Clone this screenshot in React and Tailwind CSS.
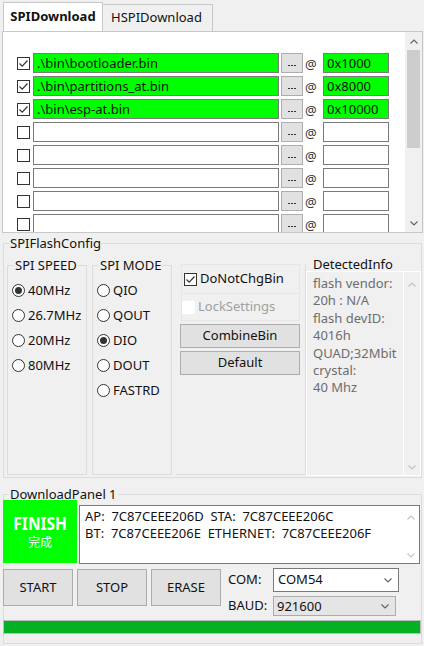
import React from "react";

const rows = [
    { on: true, file: ".\\bin\\bootloader.bin", addr: "0x1000" },
    { on: true, file: ".\\bin\\partitions_at.bin", addr: "0x8000" },
    { on: true, file: ".\\bin\\esp-at.bin", addr: "0x10000" },
    { on: false, file: "", addr: "" },
    { on: false, file: "", addr: "" },
    { on: false, file: "", addr: "" },
    { on: false, file: "", addr: "" },
    { on: false, file: "", addr: "" },
];

const speeds = [
    { label: "40MHz", on: true },
    { label: "26.7MHz", on: false },
    { label: "20MHz", on: false },
    { label: "80MHz", on: false },
];

const modes = [
    { label: "QIO", on: false },
    { label: "QOUT", on: false },
    { label: "DIO", on: true },
    { label: "DOUT", on: false },
    { label: "FASTRD", on: false },
];

const info = [
    "flash vendor:",
    "20h : N/A",
    "flash devID:",
    "4016h",
    "QUAD;32Mbit",
    "crystal:",
    "40 Mhz",
];

function Chevron({ up = false, color = "#606060", w = 8 }) {
    return (
        <svg width={w} height="5" viewBox="0 0 8 5" fill="none">
            <path
                d={up ? "M0.5 4.5L4 1L7.5 4.5" : "M0.5 0.5L4 4L7.5 0.5"}
                stroke={color}
                strokeWidth="1.1"
            />
        </svg>
    );
}

function Check({ checked, disabled = false }) {
    return (
        <div
            className={`w-[13px] h-[13px] shrink-0 border bg-white flex items-center justify-center ${
                disabled ? "border-white" : "border-[#333333]"
            }`}
        >
            {checked && (
                <svg width="11" height="11" viewBox="0 0 11 11" fill="none">
                    <path d="M1.5 5.5L4.2 8.2L9.5 2.5" stroke="#333333" strokeWidth="1.2" />
                </svg>
            )}
        </div>
    );
}

function Radio({ checked }) {
    return (
        <div className="w-[13px] h-[13px] shrink-0 rounded-full border border-[#333333] bg-white flex items-center justify-center">
            {checked && <div className="w-[7px] h-[7px] rounded-full bg-[#333333]" />}
        </div>
    );
}

function Dots() {
    return (
        <div className="flex gap-[1.5px] mt-[5px]">
            <div className="w-[1.5px] h-[1.5px] bg-[#333]" />
            <div className="w-[1.5px] h-[1.5px] bg-[#333]" />
            <div className="w-[1.5px] h-[1.5px] bg-[#333]" />
        </div>
    );
}

function FileRow({ row }) {
    const fill = row.on ? "bg-[#00ff00]" : "bg-white";
    return (
        <div className="flex items-center h-[20px] mb-[3px]">
            <Check checked={row.on} />
            <div
                className={`ml-[3px] w-[246px] h-[20px] border border-[#7a7a7a] ${fill} px-[3px] leading-[18px] whitespace-nowrap`}
            >
                {row.file}
            </div>
            <div className="ml-[2px] w-[22px] h-[20px] bg-[#e1e1e1] border border-[#adadad] flex items-center justify-center">
                <Dots />
            </div>
            <span className="w-[20px] pl-[2px] text-[#333] leading-[20px] pt-[1px]">@</span>
            <div
                className={`w-[66px] h-[20px] border border-[#7a7a7a] ${fill} px-[3px] leading-[18px]`}
            >
                {row.addr}
            </div>
        </div>
    );
}

export default function App() {
    return (
        <div className="w-[424px] h-[646px] overflow-hidden bg-[#f0f0f0] text-[13px] text-[#111] font-['Noto_Sans','Noto_Sans_CJK_SC',sans-serif]">
            {/* tabs */}
            <div className="h-[31px] flex items-end pl-[3px]">
                <div className="w-[100px] h-[29px] bg-white border border-b-0 border-[#c8c8c8] flex items-center justify-center font-bold">
                    SPIDownload
                </div>
                <div className="w-[110px] h-[27px] bg-[#f0f0f0] border border-b-0 border-l-0 border-[#c8c8c8] flex items-center pl-[8px]">
                    HSPIDownload
                </div>
            </div>

            {/* file list */}
            <div className="ml-[2px] w-[421px] h-[202px] border border-[#c8c8c8] bg-white flex overflow-hidden">
                <div className="flex-1 pt-[21px] pl-[14px]">
                    {rows.map((r, i) => (
                        <FileRow key={i} row={r} />
                    ))}
                </div>
                <div className="w-[17px] h-full bg-[#f0f0f0] flex flex-col items-center">
                    <div className="h-[18px] flex items-center justify-center">
                        <Chevron up />
                    </div>
                    <div className="w-[13px] h-[98px] bg-[#cdcdcd]" />
                    <div className="mt-auto h-[17px] flex items-center justify-center">
                        <Chevron />
                    </div>
                </div>
            </div>

            {/* SPIFlashConfig */}
            <fieldset className="mt-[2px] ml-[3px] w-[419px] h-[243px] border border-[#dcdcdc]">
                <legend className="ml-[5px] px-[1px] leading-[16px]">SPIFlashConfig</legend>
                <div className="flex items-start">
                    <fieldset className="ml-[3px] mt-[6px] w-[80px] h-[218px] border border-[#dcdcdc]">
                        <legend className="ml-[6px] px-[1px] leading-[16px]">SPI SPEED</legend>
                        <div className="mt-[5px] pl-[4px]">
                            {speeds.map((s) => (
                                <div key={s.label} className="h-[25px] flex items-center gap-[3px]">
                                    <Radio checked={s.on} />
                                    <span>{s.label}</span>
                                </div>
                            ))}
                        </div>
                    </fieldset>

                    <fieldset className="ml-[5px] mt-[6px] w-[80px] h-[218px] border border-[#dcdcdc]">
                        <legend className="ml-[6px] px-[1px] leading-[16px]">SPI MODE</legend>
                        <div className="mt-[5px] pl-[4px]">
                            {modes.map((m) => (
                                <div key={m.label} className="h-[25px] flex items-center gap-[3px]">
                                    <Radio checked={m.on} />
                                    <span>{m.label}</span>
                                </div>
                            ))}
                        </div>
                    </fieldset>

                    <div className="ml-[4px] mt-[13px] w-[130px] h-[211px] border-r border-b border-[#dcdcdc]">
                        <div className="mx-[5px] h-[29px] border border-b-0 border-[#e6e6e6] flex items-center pl-[2px] gap-[3px]">
                            <Check checked />
                            <span>DoNotChgBin</span>
                        </div>
                        <div className="mx-[5px] h-[28px] border border-[#e6e6e6] flex items-center gap-[3px]">
                            <Check checked={false} disabled />
                            <span className="text-[#a0a0a0]">LockSettings</span>
                        </div>
                        <button className="mt-[3px] ml-[4px] w-[120px] h-[24px] bg-[#e1e1e1] border border-[#adadad] flex items-center justify-center">
                            CombineBin
                        </button>
                        <button className="mt-[3px] ml-[4px] w-[120px] h-[24px] bg-[#e1e1e1] border border-[#adadad] flex items-center justify-center">
                            Default
                        </button>
                    </div>

                    <div className="w-[115px] mt-[6px]">
                        <div className="pl-[7px] h-[14px] leading-[14px]">DetectedInfo</div>
                        <div className="h-[205px] border border-white bg-[#f0f0f0] flex">
                            <div className="flex-1 pl-[6px] pt-[3px] leading-[17.4px] text-[#6d6d6d]">
                                {info.map((t) => (
                                    <div key={t}>{t}</div>
                                ))}
                            </div>
                            <div className="w-[17px] border-l border-white flex flex-col items-center">
                                <div className="h-[24px] flex items-center">
                                    <Chevron up color="#c2c2c2" />
                                </div>
                                <div className="mt-auto h-[16px] flex items-center">
                                    <Chevron color="#c2c2c2" />
                                </div>
                            </div>
                        </div>
                    </div>
                </div>
            </fieldset>

            {/* DownloadPanel */}
            <fieldset className="mt-[8px] ml-[3px] w-[419px] h-[158px] border border-[#dcdcdc]">
                <legend className="ml-[5px] px-[1px] leading-[16px]">DownloadPanel 1</legend>
                <div className="flex items-start">
                    <div className="-ml-[1px] -mt-[2px] w-[74px] h-[63px] bg-[#00ff00] flex flex-col items-center justify-center text-white">
                        <span className="inline-block text-[18px] font-bold leading-[22px] scale-x-[0.86]">FINISH</span>
                        <span className="text-[12px] leading-[18px]">完成</span>
                    </div>
                    <div className="ml-[2px] mt-[3px] w-[341px] h-[59px] border border-[#7a7a7a] bg-white flex">
                        <div className="flex-1 pl-[5px] pt-[2px] leading-[17px] whitespace-pre">
                            <div>AP:  7C87CEEE206D  STA:  7C87CEEE206C</div>
                            <div>BT:  7C87CEEE206E  ETHERNET:  7C87CEEE206F</div>
                        </div>
                        <div className="w-[17px] flex flex-col items-center">
                            <div className="h-[22px] flex items-center">
                                <Chevron up color="#c2c2c2" />
                            </div>
                            <div className="mt-auto h-[16px] flex items-center">
                                <Chevron color="#c2c2c2" />
                            </div>
                        </div>
                    </div>
                </div>

                <div className="flex items-start mt-[5px]">
                    <button className="-ml-[1px] w-[70px] h-[37px] bg-[#e1e1e1] border border-[#adadad]">START</button>
                    <button className="ml-[4px] w-[70px] h-[37px] bg-[#e1e1e1] border border-[#adadad]">STOP</button>
                    <button className="ml-[4px] w-[70px] h-[37px] bg-[#e1e1e1] border border-[#adadad]">ERASE</button>
                    <div className="ml-[7px] -mt-[1px]">
                        <div className="h-[24px] flex items-center">
                            <span className="w-[45px]">COM:</span>
                            <div className="w-[126px] h-[24px] border border-[#7a7a7a] bg-white flex items-center pl-[4px] pr-[6px]">
                                <span className="flex-1">COM54</span>
                                <Chevron />
                            </div>
                        </div>
                        <div className="mt-[4px] h-[20px] flex items-center">
                            <span className="w-[45px]">BAUD:</span>
                            <div className="w-[123px] h-[20px] border border-[#acacac] bg-[#e5e5e5] flex items-center pl-[3px] pr-[6px]">
                                <span className="flex-1 pt-[2px]">921600</span>
                                <Chevron />
                            </div>
                        </div>
                    </div>
                </div>

                <div className="mt-[4px] -ml-[1px] w-[418px] h-[14px] bg-[#06b025] border border-[#bcbcbc]" />
            </fieldset>
        </div>
    );
}
